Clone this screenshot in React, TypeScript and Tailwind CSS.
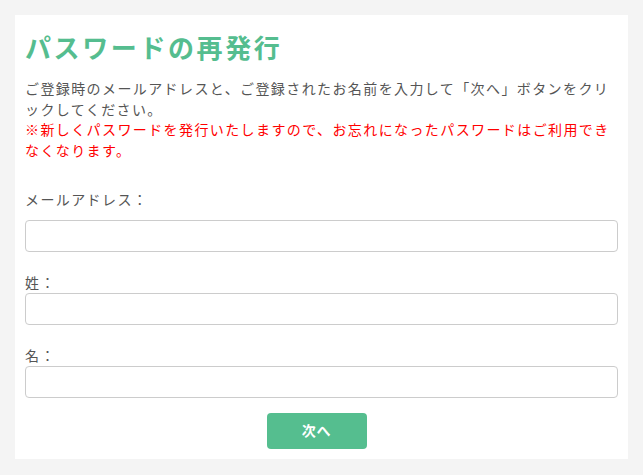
import React from "react";

export default function App() {
  const font = { fontFamily: '"Noto Sans CJK JP", "Noto Sans", sans-serif' };
  return (
    <div className="min-h-[475px] w-full bg-[#f4f4f4] p-[15px]" style={font}>
      <div className="bg-white px-[10px] pt-[10px] pb-[10px]">
        <h1 className="text-[26px] leading-[43px] font-bold text-[#55bd8f] tracking-[0.1em]">
          パスワードの再発行
        </h1>
        <p className="mt-[10px] text-[14px] leading-[20.7px] text-[#555555] tracking-[0.1em]">
          ご登録時のメールアドレスと、ご登録されたお名前を入力して「次へ」ボタンをクリックしてください。
          <br />
          <span className="text-[#ff0000]">
            ※新しくパスワードを発行いたしますので、お忘れになったパスワードはご利用できなくなります。
          </span>
        </p>
        <div className="mt-[28px]">
          <label className="block text-[14px] leading-[21px] text-[#555555] tracking-[0.1em] mb-[10px]">
            メールアドレス：
          </label>
          <input className="block w-full h-[32px] rounded-[4px] border border-[#cccccc] bg-white outline-none" />
        </div>
        <div className="mt-[20px]">
          <label className="block text-[14px] leading-[21px] text-[#555555] tracking-[0.1em]">
            姓：
          </label>
          <input className="block w-full h-[32px] rounded-[4px] border border-[#cccccc] bg-white outline-none" />
        </div>
        <div className="mt-[20px]">
          <label className="block text-[14px] leading-[21px] text-[#555555] tracking-[0.1em]">
            名：
          </label>
          <input className="block w-full h-[32px] rounded-[4px] border border-[#cccccc] bg-white outline-none" />
        </div>
        <div className="mt-[15px] flex justify-center pr-[10px]">
          <button className="w-[100px] h-[36px] rounded-[4px] bg-[#55be8f] text-white text-[14px] font-bold tracking-[0.05em]">
            次へ
          </button>
        </div>
      </div>
    </div>
  );
}
